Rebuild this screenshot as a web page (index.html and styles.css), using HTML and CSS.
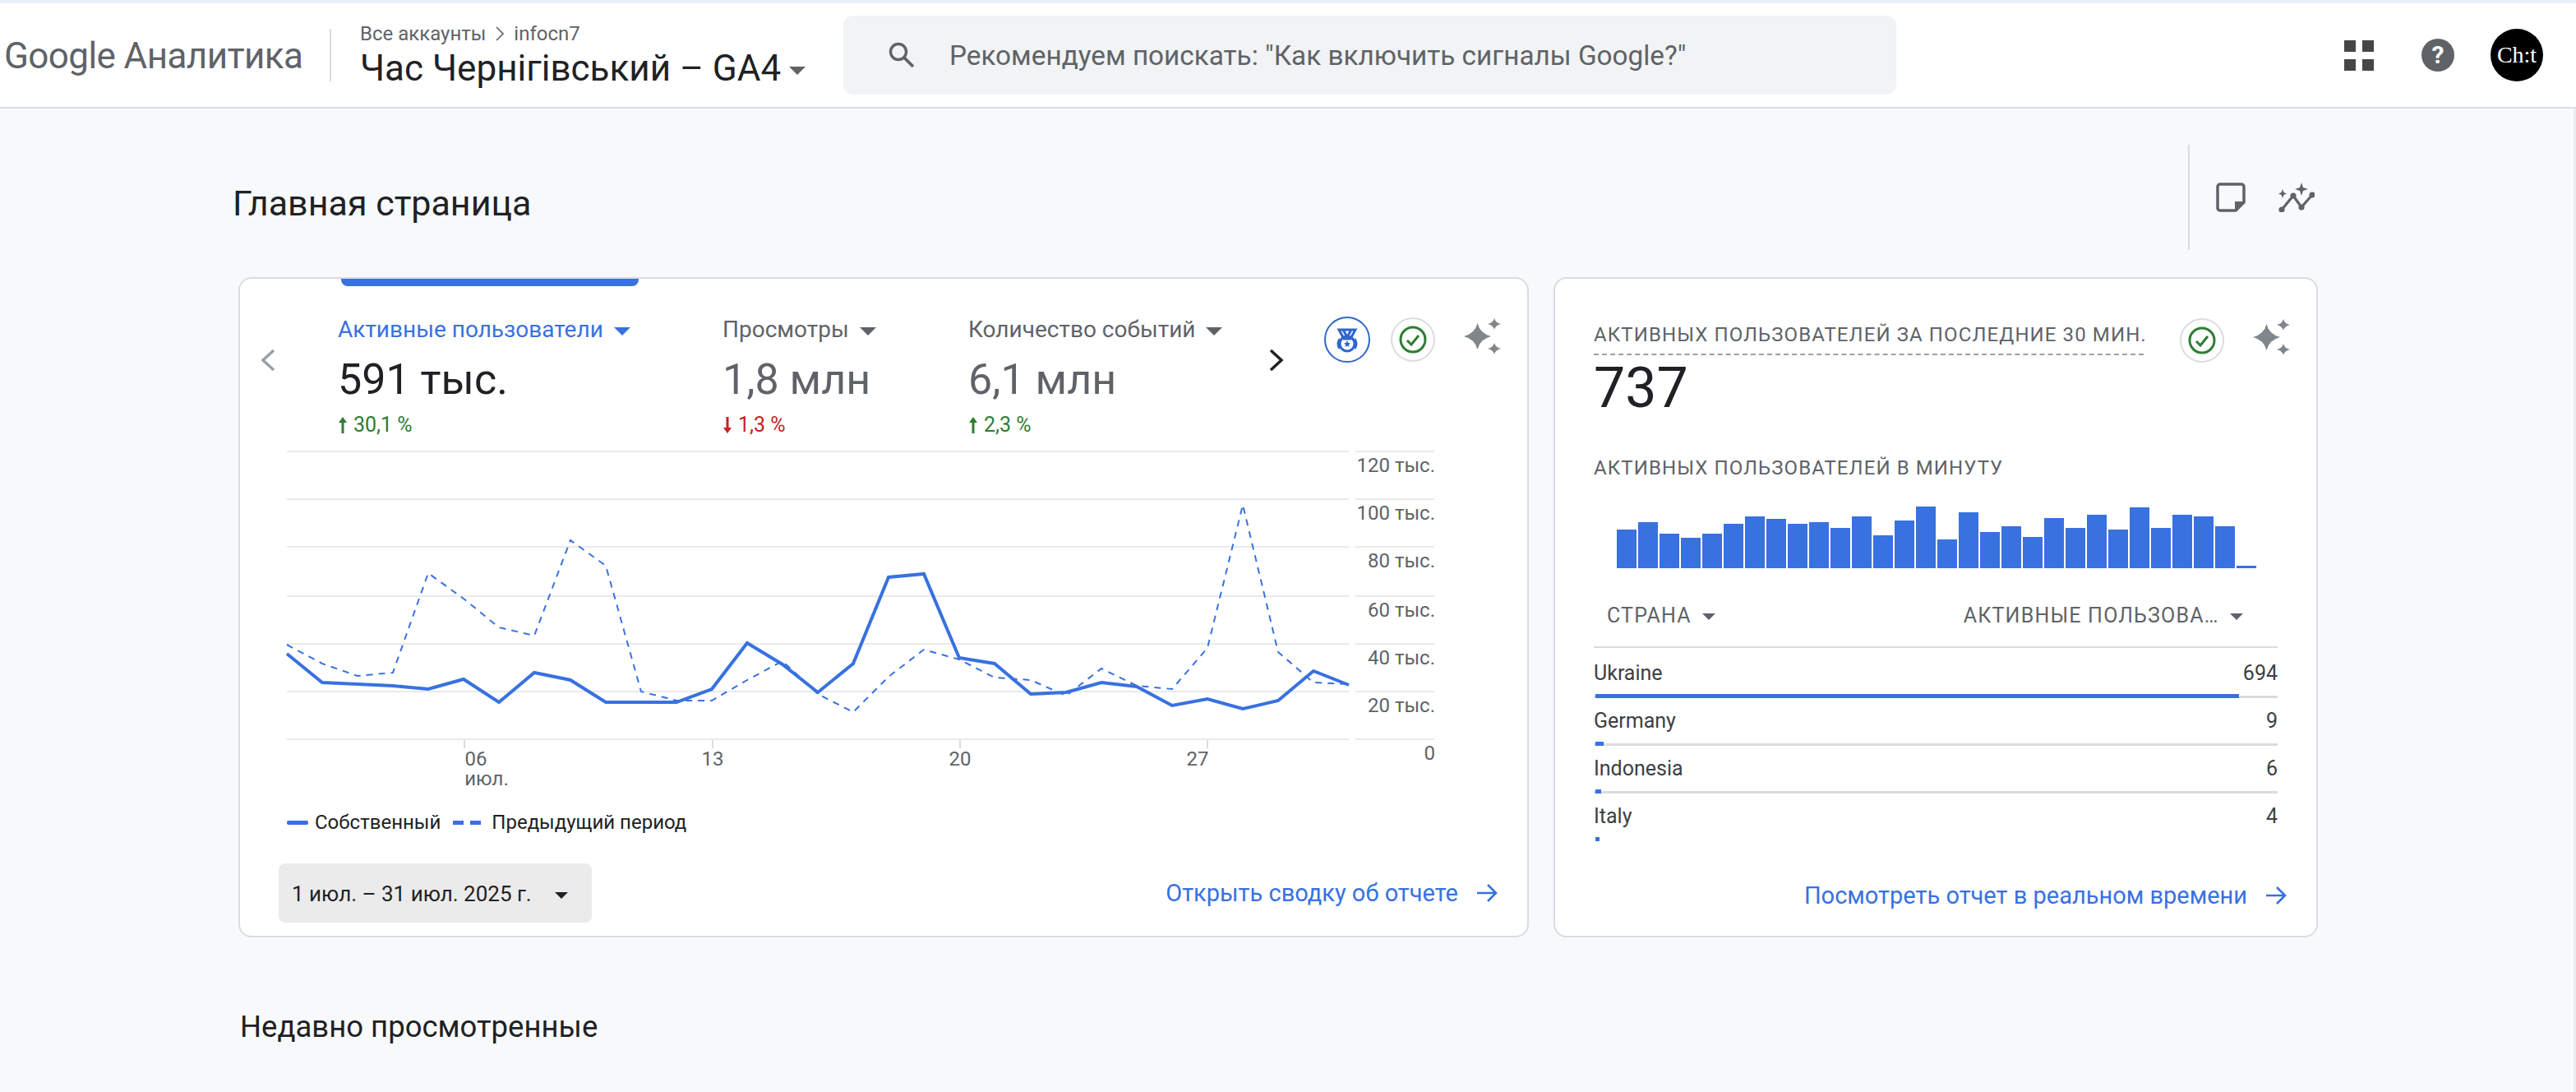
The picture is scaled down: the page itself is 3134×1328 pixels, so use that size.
FILE: index.html
```html
<!DOCTYPE html>
<html lang="ru">
<head>
<meta charset="utf-8">
<title>Google Аналитика</title>
<link rel="stylesheet" href="styles.css">
</head>
<body>
<svg class="defs" width="0" height="0" aria-hidden="true">
  <symbol id="spark" viewBox="0 0 45 44">
    <path d="M16.500 6 Q19.500 18.500 33 22 Q19.500 25.500 16.500 38 Q13.500 25.500 0 22 Q13.500 18.500 16.500 6Z"/>
    <path d="M37 0 Q38.500 5.500 45 7 Q38.500 8.500 37 14 Q35.500 8.500 29 7 Q35.500 5.500 37 0Z"/>
    <path d="M37 30 Q38.500 35.500 45 37 Q38.500 38.500 37 44 Q35.500 38.500 29 37 Q35.500 35.500 37 30Z"/>
  </symbol>
  <symbol id="check" viewBox="0 0 54 56">
    <circle cx="27" cy="28" r="26" fill="#fff" stroke="#dadce0" stroke-width="2"/>
    <circle cx="27" cy="28" r="15" fill="none" stroke="#2e7d32" stroke-width="3"/>
    <path d="M20 29 L25 34 L34 23" fill="none" stroke="#2e7d32" stroke-width="3"/>
  </symbol>
  <symbol id="arrow-right" viewBox="0 0 26 26">
    <path d="M1 13 H24 M14 3 L24 13 L14 23" fill="none" stroke="#3871e0" stroke-width="2.600"/>
  </symbol>
  <symbol id="up" viewBox="0 0 12 24">
    <path d="M6 2 L11 9 H7.500 V22 H4.500 V9 H1Z" fill="#2e7d32"/>
  </symbol>
  <symbol id="down" viewBox="0 0 12 24">
    <path d="M6 22 L11 15 H7.500 V2 H4.500 V15 H1Z" fill="#c5221f"/>
  </symbol>
</svg>

<div class="strip"></div>
<header class="topbar">
  <div class="logo">Google Аналитика</div>
  <div class="account">
    <div class="crumbs">Все аккаунты <svg class="crumb-sep" viewBox="0 0 10 18" width="10" height="18"><path d="M1 1 L9 9 L1 17" fill="none" stroke="#5f6368" stroke-width="1.600"/></svg> infocn7</div>
    <div class="property">Час Чернігівський – GA4<span class="caret caret-gray"></span></div>
  </div>
  <div class="search">
    <svg class="search-icon" viewBox="0 0 36 36" width="36" height="36"><circle cx="14" cy="14" r="9.500" fill="none" stroke="#5f6368" stroke-width="3.400"/><path d="M21 21 L32 32" stroke="#5f6368" stroke-width="3.800"/></svg>
    <span>Рекомендуем поискать: "Как включить сигналы Google?"</span>
  </div>
  <div class="top-actions">
    <div class="apps"><i></i><i></i><i></i><i></i></div>
    <div class="help">?</div>
    <div class="avatar">Ch:t</div>
  </div>
</header>

<main class="page">
  <div class="title-row">
    <h1 class="page-title">Главная страница</h1>
    <div class="title-tools">
      <svg viewBox="0 0 36 36" width="36" height="36"><path d="M2 5 a3 3 0 0 1 3 -3 H31 a3 3 0 0 1 3 3 V24 L24 34 H5 a3 3 0 0 1 -3 -3Z" fill="none" stroke="#5f6368" stroke-width="3.500"/><path d="M23 23 H35 L23 35Z" fill="#5f6368"/></svg>
      <svg viewBox="0 0 44 36" width="44" height="36"><path d="M4 33 L18 16 L28 30 L41 15" fill="none" stroke="#5f6368" stroke-width="3.200"/><circle cx="4" cy="33" r="3.600" fill="#5f6368"/><circle cx="18" cy="16" r="3.600" fill="#5f6368"/><circle cx="28" cy="30" r="3.600" fill="#5f6368"/><circle cx="41" cy="15" r="3.600" fill="#5f6368"/><path d="M28 0 L30 6 L36 8 L30 10 L28 16 L26 10 L20 8 L26 6Z" fill="#5f6368"/><path d="M5 8 L6.500 12 L10 13.500 L6.500 15 L5 19 L3.500 15 L0 13.500 L3.500 12Z" fill="#5f6368"/></svg>
    </div>
  </div>

  <div class="cards">
    <section class="card card-main">
      <div class="tab-mark"></div>
      <div class="metrics">
        <svg class="chev" viewBox="0 0 19 28" width="19" height="28"><path d="M17 2 L4 14 L17 26" fill="none" stroke="#9aa0a6" stroke-width="3.500"/></svg>
        <div class="metric metric-active">
          <div class="metric-label">Активные пользователи <span class="caret caret-blue"></span></div>
          <div class="metric-value">591 тыс.</div>
          <div class="metric-change up"><svg width="12" height="24"><use href="#up"/></svg> 30,1 %</div>
        </div>
        <div class="metric">
          <div class="metric-label">Просмотры <span class="caret caret-gray"></span></div>
          <div class="metric-value">1,8 млн</div>
          <div class="metric-change down"><svg width="12" height="24"><use href="#down"/></svg> 1,3 %</div>
        </div>
        <div class="metric">
          <div class="metric-label">Количество событий <span class="caret caret-gray"></span></div>
          <div class="metric-value">6,1 млн</div>
          <div class="metric-change up"><svg width="12" height="24"><use href="#up"/></svg> 2,3 %</div>
        </div>
        <svg class="chev" viewBox="0 0 19 28" width="19" height="28"><path d="M2 2 L15 14 L2 26" fill="none" stroke="#202124" stroke-width="3.500"/></svg>
        <svg class="badge" viewBox="0 0 56 56" width="56" height="56">
          <circle cx="28" cy="28" r="27" fill="#fff" stroke="#2f66d0" stroke-width="2"/>
          <path d="M18 16 H38 L32 27 H24Z M23 16 L28 25 L33 16" fill="none" stroke="#2f66d0" stroke-width="3"/>
          <circle cx="28" cy="33" r="9" fill="none" stroke="#2f66d0" stroke-width="3"/>
          <path d="M19 27 a9 9 0 0 0 0 12 M37 27 a9 9 0 0 1 0 12" fill="none" stroke="#2f66d0" stroke-width="2.500"/>
          <path d="M28 29 L29.300 32 L32 32.300 L30 34.300 L30.500 37 L28 35.600 L25.500 37 L26 34.300 L24 32.300 L26.700 32Z" fill="#2f66d0"/>
        </svg>
        <svg class="badge" width="54" height="56"><use href="#check"/></svg>
        <svg class="spark" width="45" height="44"><use href="#spark"/></svg>
      </div>

      <svg class="chart" viewBox="330 540 1430 430" width="1430" height="430">
        <g class="grid">
          <path d="M349 549 H1641 M1649 549 H1745"/>
          <path d="M349 607 H1641 M1649 607 H1745"/>
          <path d="M349 665 H1641 M1649 665 H1745"/>
          <path d="M349 725 H1641 M1649 725 H1745"/>
          <path d="M349 783 H1641 M1649 783 H1745"/>
          <path d="M349 841 H1641 M1649 841 H1745"/>
          <path d="M349 899 H1641 M1649 899 H1745"/>
          <path class="tick" d="M565 900 V910 M867 900 V910 M1168 900 V910 M1469 900 V910"/>
        </g>
        <polyline class="prev" points="349,784 392,807 435,822 478,818 521,697 564,728 607,763 650,773 694,657 737,688 780,841 823,852 866,852 909,827 952,804 995,844 1038,866 1081,823 1124,790 1167,802 1210,824 1254,827 1297,846 1340,813 1383,834 1426,838 1469,788 1512,614 1555,793 1598,830 1641,832"/>
        <polyline class="own" points="349,795 392,830 435,832 478,834 521,838 564,826 607,854 650,818 694,827 737,854 780,854 823,854 866,838 909,782 952,808 995,842 1038,807 1081,702 1124,698 1167,800 1210,807 1254,844 1297,842 1340,830 1383,835 1426,858 1469,850 1512,862 1555,852 1598,816 1641,833"/>
        <g class="y-labels">
          <text x="1746" y="574">120 тыс.</text>
          <text x="1746" y="632">100 тыс.</text>
          <text x="1746" y="690">80 тыс.</text>
          <text x="1746" y="750">60 тыс.</text>
          <text x="1746" y="808">40 тыс.</text>
          <text x="1746" y="866">20 тыс.</text>
          <text x="1746" y="924">0</text>
        </g>
        <g class="x-labels">
          <text x="579" y="931">06</text>
          <text x="867" y="931">13</text>
          <text x="1168" y="931">20</text>
          <text x="1457" y="931">27</text>
          <text x="592" y="955">июл.</text>
        </g>
      </svg>

      <div class="legend">
        <span class="swatch-solid"></span><span class="legend-own">Собственный</span>
        <span class="swatch-dash"><i></i><i></i></span><span>Предыдущий период</span>
      </div>

      <div class="card-foot">
        <div class="date-btn">1 июл. – 31 июл. 2025 г. <span class="caret caret-dark"></span></div>
        <a class="link">Открыть сводку об отчете <svg width="26" height="26"><use href="#arrow-right"/></svg></a>
      </div>
    </section>

    <section class="card card-side">
      <div class="side-head">
        <div class="side-title">АКТИВНЫХ ПОЛЬЗОВАТЕЛЕЙ ЗА ПОСЛЕДНИЕ 30 МИН.</div>
        <svg class="badge" width="54" height="56"><use href="#check"/></svg>
        <svg class="spark" width="45" height="44"><use href="#spark"/></svg>
      </div>
      <div class="side-value">737</div>
      <div class="side-sub">АКТИВНЫХ ПОЛЬЗОВАТЕЛЕЙ В МИНУТУ</div>
      <div class="bars">
        <i style="height:47px"></i><i style="height:56px"></i><i style="height:42px"></i><i style="height:37px"></i><i style="height:42px"></i><i style="height:54px"></i><i style="height:63px"></i><i style="height:60px"></i><i style="height:54px"></i><i style="height:56px"></i><i style="height:49px"></i><i style="height:63px"></i><i style="height:40px"></i><i style="height:58px"></i><i style="height:75px"></i><i style="height:35px"></i><i style="height:68px"></i><i style="height:44px"></i><i style="height:51px"></i><i style="height:38px"></i><i style="height:61px"></i><i style="height:49px"></i><i style="height:65px"></i><i style="height:47px"></i><i style="height:74px"></i><i style="height:49px"></i><i style="height:65px"></i><i style="height:63px"></i><i style="height:51px"></i><i style="height:3px"></i>
      </div>
      <div class="table-head">
        <span class="th-country">СТРАНА <span class="caret caret-small"></span></span>
        <span class="th-users">АКТИВНЫЕ ПОЛЬЗОВА… <span class="caret caret-small"></span></span>
      </div>
      <div class="rows">
        <div class="row"><div class="row-text"><span>Ukraine</span><span>694</span></div><div class="track"><div class="fill" style="width:783px"></div></div></div>
        <div class="row"><div class="row-text"><span>Germany</span><span>9</span></div><div class="track"><div class="fill" style="width:10px"></div></div></div>
        <div class="row"><div class="row-text"><span>Indonesia</span><span>6</span></div><div class="track"><div class="fill" style="width:7px"></div></div></div>
        <div class="row"><div class="row-text"><span>Italy</span><span>4</span></div><div class="track track-last"><div class="fill" style="width:5px"></div></div></div>
      </div>
      <div class="side-foot">
        <a class="link">Посмотреть отчет в реальном времени <svg width="26" height="26"><use href="#arrow-right"/></svg></a>
      </div>
    </section>
  </div>

  <h2 class="recent">Недавно просмотренные</h2>
</main>
<div class="scroll-edge"></div>
</body>
</html>
```
FILE: styles.css
```css
* { box-sizing: border-box; }
html, body { margin: 0; height: 1328px; overflow: hidden; }
body { background: #f8f9fa; font-family: Roboto, "Noto Sans", sans-serif; color: #202124; position: relative; }
.defs { position: absolute; }

.strip { height: 4px; background: #e8f0fe; }
.topbar { height: 128px; background: #fff; border-bottom: 2px solid #dadce0; display: flex; align-items: center; padding-left: 5px; }
.logo { width: 398px; height: 64px; border-right: 2px solid #dadce0; font-size: 44px; line-height: 66px; color: #5f6368; letter-spacing: -0.6px; white-space: nowrap; }
.account { width: 623px; padding-left: 35px; }
.crumbs { font-size: 24px; line-height: 28px; color: #5f6368; display: flex; align-items: center; gap: 6px; white-space: pre; }
.crumb-sep { flex: none; }
.property { font-size: 44px; line-height: 50px; margin-top: 3px; color: #202124; white-space: nowrap; }
.search { width: 1281px; height: 96px; background: #f1f3f4; border-radius: 12px; display: flex; align-items: center; padding-left: 53px; gap: 40px; font-size: 33.3px; color: #5f6368; }
.search-icon { flex: none; }
.top-actions { display: flex; align-items: center; margin-left: 545px; }
.apps { width: 36px; display: grid; grid-template-columns: 14px 14px; gap: 9px 8px; }
.apps i { height: 14px; background: #444746; }
.help { width: 40px; height: 40px; margin-left: 58px; border-radius: 50%; background: #5f6368; color: #fff; font-size: 30px; font-weight: 700; line-height: 40px; text-align: center; }
.avatar { width: 64px; height: 64px; margin-left: 44px; border-radius: 50%; background: #000; color: #fff; font-family: "Liberation Serif", serif; font-size: 28px; line-height: 64px; text-align: center; }

.caret { display: inline-block; width: 0; height: 0; border-style: solid; border-color: transparent; border-width: 10px 10px 0; vertical-align: middle; margin-left: 6px; }
.property .caret { margin-left: 10px; }
.caret-gray { border-top-color: #5f6368; }
.caret-blue { border-top-color: #3871e0; }
.caret-dark { border-top-color: #202124; border-width: 8px 8px 0; margin-left: 22px; }
.caret-small { border-top-color: #5f6368; border-width: 8px 8px 0; margin-left: 6px; }

.page { padding-left: 283px; }
.title-row { height: 172px; padding: 44px 0 0; display: flex; margin-bottom: 33px; }
.page-title { width: 2379px; height: 128px; margin: 0; font-size: 43px; font-weight: 400; line-height: 142px; color: #202124; white-space: nowrap; }
.title-tools { height: 128px; border-left: 2px solid #dadce0; padding-left: 32px; padding-top: 46px; display: flex; gap: 40px; align-items: flex-start; }

.cards { display: flex; gap: 30px; margin-left: 7px; }
.card { height: 803px; background: #fff; border: 2px solid #dadce0; border-radius: 16px; position: relative; overflow: hidden; }
.card-main { width: 1570px; }
.card-side { width: 930px; padding: 0 47px; }
.tab-mark { position: absolute; left: 123px; top: -2px; width: 362px; height: 11px; background: #3871e0; border-radius: 0 0 8px 8px; }

.metrics { height: 201px; padding: 46px 0 0 24px; display: grid; grid-template-columns: 95px 468px 299px 366px 67px 81px 89px 45px; align-items: start; }
.chev { margin-top: 39px; }
.metric-label { font-size: 28px; line-height: 32px; color: #5f6368; white-space: nowrap; }
.metric-active .metric-label { color: #3871e0; }
.metric-value { font-size: 52px; line-height: 60px; margin-top: 15px; color: #5f6368; white-space: nowrap; }
.metric-active .metric-value { color: #202124; }
.metric-change { font-size: 25px; line-height: 30px; margin-top: 10px; display: flex; align-items: center; gap: 7px; }
.metric-change.up { color: #2e7d32; }
.metric-change.down { color: #c5221f; }
.spark { fill: #80868b; flex: none; margin-top: 2px; }
.badge { flex: none; }

.chart { display: block; margin-left: 38px; }
.grid path { fill: none; stroke: #e8eaed; stroke-width: 2; }
.grid .tick { stroke: #dadce0; }
.own { fill: none; stroke: #3871e0; stroke-width: 4; stroke-linejoin: miter; }
.prev { fill: none; stroke: #3871e0; stroke-width: 2; stroke-dasharray: 8 7; }
.y-labels text { font-size: 24px; fill: #5f6368; text-anchor: end; }
.x-labels text { font-size: 24px; fill: #5f6368; text-anchor: middle; }

.legend { height: 60px; padding-left: 57px; display: flex; align-items: center; font-size: 24px; line-height: 60px; color: #202124; }
.swatch-solid { width: 26px; height: 5px; background: #3871e0; margin-right: 8px; border-radius: 2px; }
.legend-own { margin-right: 15px; }
.swatch-dash { width: 34px; margin-right: 13px; display: flex; justify-content: space-between; }
.swatch-dash i { width: 13px; height: 5px; background: #3871e0; }

.card-foot { margin-top: 20px; padding: 0 36px 0 47px; display: flex; justify-content: space-between; align-items: center; }
.date-btn { width: 381px; height: 72px; background: #ebebeb; border-radius: 8px; padding-left: 16px; font-size: 26px; line-height: 74px; color: #202124; white-space: nowrap; }
.link { font-size: 29px; color: #3871e0; display: flex; align-items: center; gap: 22px; white-space: nowrap; }
.link svg { flex: none; }

.side-head { padding-top: 47px; display: flex; align-items: flex-start; }
.side-title { width: 669px; height: 40px; margin: 6px 44px 0 0; border-bottom: 2px dashed #9aa0a6; font-size: 24px; line-height: 30px; letter-spacing: 1.1px; color: #5f6368; white-space: nowrap; flex: none; }
.side-head .spark { margin-left: 35px; }
.side-value { font-size: 68px; line-height: 76px; margin-top: -8px; color: #202124; }
.side-sub { margin-top: 44px; font-size: 24px; line-height: 30px; letter-spacing: 1.1px; color: #5f6368; white-space: nowrap; }
.bars { height: 105px; margin: 2px 0 0 28px; display: flex; align-items: flex-end; gap: 2px; }
.bars i { width: 24px; background: #3871e0; flex: none; }
.table-head { height: 97px; border-bottom: 2px solid #dadce0; display: flex; align-items: center; justify-content: space-between; padding: 20px 42px 0 16px; font-size: 25px; letter-spacing: 1.2px; color: #5f6368; white-space: nowrap; }
.rows { margin-top: 3px; }
.row-text { height: 55px; display: flex; justify-content: space-between; align-items: center; font-size: 25px; color: #3c4043; }
.track { height: 3px; background: #dadce0; position: relative; }
.track-last { background: transparent; }
.fill { position: absolute; left: 2px; top: -2px; height: 5px; background: #3871e0; }
.side-foot { display: flex; justify-content: flex-end; margin: 49px -11px 0 0; }

.recent { margin: 85px 0 0 9px; font-size: 36.5px; font-weight: 400; line-height: 48px; color: #202124; white-space: nowrap; }
.scroll-edge { position: absolute; right: 0; top: 132px; bottom: 0; width: 3px; background: #e8eaed; border-radius: 3px 0 0 0; }
```
